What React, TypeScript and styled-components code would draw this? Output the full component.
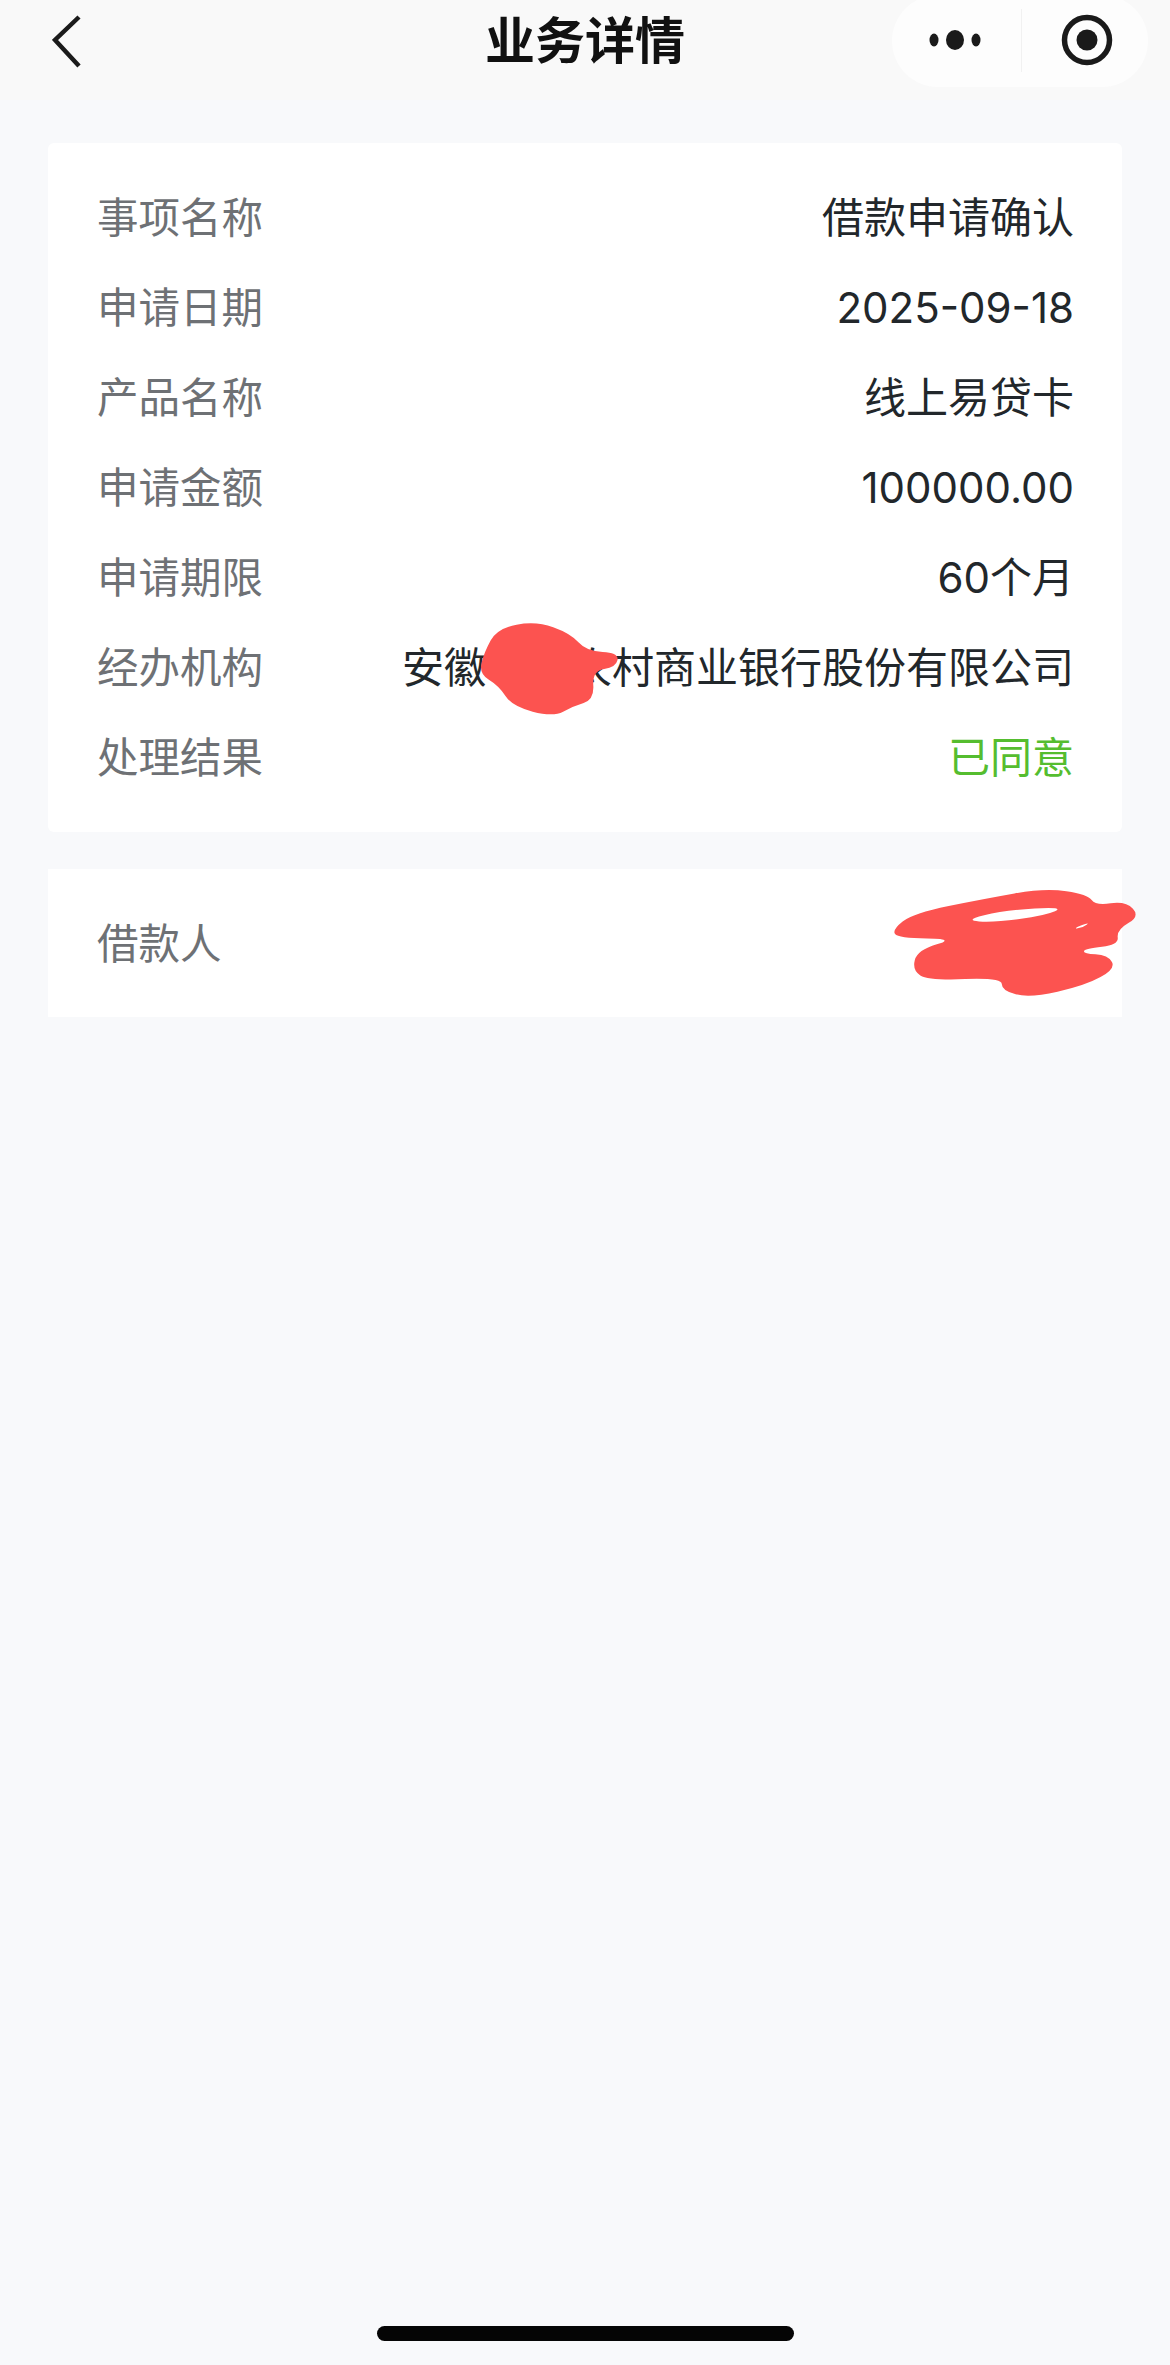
import styled, { createGlobalStyle } from "styled-components";

const rows = [
  { label: "事项名称", value: "借款申请确认" },
  { label: "申请日期", value: "2025-09-18" },
  { label: "产品名称", value: "线上易贷卡" },
  { label: "申请金额", value: "100000.00" },
  { label: "申请期限", value: "60个月" },
  { label: "经办机构", value: "安徽　　农村商业银行股份有限公司" },
  { label: "处理结果", value: "已同意", done: true },
];

type Point = [number, number];

// closed outline through the midpoints, so a hand marker looks round
const smooth = (points: Point[]) => {
  const mid = (a: Point, b: Point) => `${(a[0] + b[0]) / 2} ${(a[1] + b[1]) / 2}`;
  const n = points.length;
  let d = `M${mid(points[n - 1], points[0])}`;
  points.forEach((p, i) => {
    d += ` Q${p[0]} ${p[1]} ${mid(p, points[(i + 1) % n])}`;
  });
  return d + " Z";
};

const blotPath = smooth([
  [310, 62], [380, 100], [412, 155], [478, 160], [472, 205], [424, 215], [428, 305],
  [385, 325], [345, 358], [262, 325], [235, 262], [195, 225], [205, 160], [232, 85],
]);

const scrawlPath = [
  smooth([
    [1018, 990], [1060, 940], [1200, 898], [1320, 866], [1405, 885], [1420, 918], [1480, 905],
    [1508, 950], [1462, 990], [1466, 1035], [1400, 1045], [1395, 1060], [1445, 1065], [1460, 1105],
    [1400, 1155], [1290, 1192], [1235, 1170], [1235, 1132], [1090, 1140], [1058, 1110], [1068, 1050],
    [1145, 1016], [1030, 1015],
  ]),
  smooth([[1160, 962], [1240, 932], [1360, 922], [1320, 948], [1220, 968]]),
  smooth([[1375, 987], [1410, 966], [1395, 984]]),
].join(" ");

export default function App() {
  return (
    <Page>
      <GlobalStyle />
      <Header>
        <Back width="30" height="54" viewBox="0 0 30 54">
          <path d="M27 2 L3 25 L27 51" fill="none" stroke="#1b1b1b" strokeWidth="4.5" />
        </Back>
        <Title>业务详情</Title>
        <Capsule>
          <svg width="56" height="20" viewBox="0 0 56 20">
            <ellipse cx="5" cy="10" rx="4.5" ry="6.5" fill="#1a1a1a" />
            <ellipse cx="26" cy="10" rx="9" ry="10" fill="#1a1a1a" />
            <ellipse cx="47" cy="10" rx="4.5" ry="6.5" fill="#1a1a1a" />
          </svg>
          <CapsuleLine />
          <svg width="52" height="52" viewBox="0 0 52 52">
            <circle cx="26" cy="26" r="22.5" fill="none" stroke="#1a1a1a" strokeWidth="5.5" />
            <circle cx="26" cy="26" r="10.5" fill="#1a1a1a" />
          </svg>
        </Capsule>
      </Header>
      <Content>
        <DetailCard>
          {rows.map((row) => (
            <Row key={row.label}>
              <Label>{row.label}</Label>
              <Value $done={row.done}>{row.value}</Value>
            </Row>
          ))}
          <Blot width="140" height="96" viewBox="195 62 283 296" preserveAspectRatio="none">
            <path d={blotPath} fill="#fc5350" />
          </Blot>
        </DetailCard>
        <BorrowerCard>
          <Label>借款人</Label>
          <Scrawl width="248" height="110" viewBox="1018 866 490 326" preserveAspectRatio="none">
            <path d={scrawlPath} fill="#fc5350" fillRule="evenodd" />
          </Scrawl>
        </BorrowerCard>
      </Content>
      <HomeBar />
    </Page>
  );
}

const GlobalStyle = createGlobalStyle`
  html, body {
    margin: 0;
    padding: 0;
    background: #f8f9fb;
  }
  * {
    box-sizing: border-box;
  }
`;

const Page = styled.div`
  width: 1170px;
  height: 2365px;
  display: flex;
  flex-direction: column;
  overflow: hidden;
  background: #f8f9fb;
  font-family: "Inter", "Noto Sans CJK SC", sans-serif;
`;

const Header = styled.header`
  height: 100px;
  flex-shrink: 0;
  display: grid;
  grid-template-columns: 1fr auto 1fr;
  align-items: start;
  padding: 0 22px;
  background: #f9f9f9;
`;

const Back = styled.svg`
  margin: 15px 0 0 30px;
  display: block;
`;

const Title = styled.h1`
  margin: 10px 0 0;
  font-size: 50px;
  line-height: 62px;
  font-weight: 700;
  color: #111111;
`;

const Capsule = styled.div`
  justify-self: end;
  width: 256px;
  height: 92px;
  margin-top: -5px;
  padding: 0 12px 2px 37px;
  display: flex;
  align-items: center;
  border-radius: 46px;
  background: #fdfdfd;
`;

const CapsuleLine = styled.div`
  width: 1px;
  height: 63px;
  margin: 0 39px 0 36px;
  background: #f1f1f1;
`;

const Content = styled.main`
  display: flex;
  flex-direction: column;
  gap: 37px;
  padding: 43px 48px 0;
`;

const DetailCard = styled.section`
  position: relative;
  height: 689px;
  padding: 30px 48px 0 49px;
  background: #ffffff;
  border-radius: 6px;
`;

const Row = styled.div`
  height: 90px;
  display: flex;
  align-items: center;
  justify-content: space-between;
`;

const Label = styled.span`
  font-size: 41.5px;
  line-height: 56px;
  color: #6e7175;
  white-space: nowrap;
`;

const Value = styled.span<{ $done?: boolean }>`
  font-size: 42px;
  line-height: 56px;
  color: ${({ $done }) => ($done ? "#55bd2f" : "#22272b")};
  white-space: nowrap;
`;

const Blot = styled.svg`
  position: absolute;
  left: 431px;
  top: 478px;
`;

const BorrowerCard = styled.section`
  position: relative;
  height: 148px;
  padding: 2px 49px 0;
  display: flex;
  align-items: center;
  background: #ffffff;
`;

const Scrawl = styled.svg`
  position: absolute;
  right: -18px;
  top: 19px;
`;

const HomeBar = styled.div`
  width: 417px;
  height: 15px;
  margin: auto 0 24px 377px;
  border-radius: 8px;
  background: #050505;
`;
